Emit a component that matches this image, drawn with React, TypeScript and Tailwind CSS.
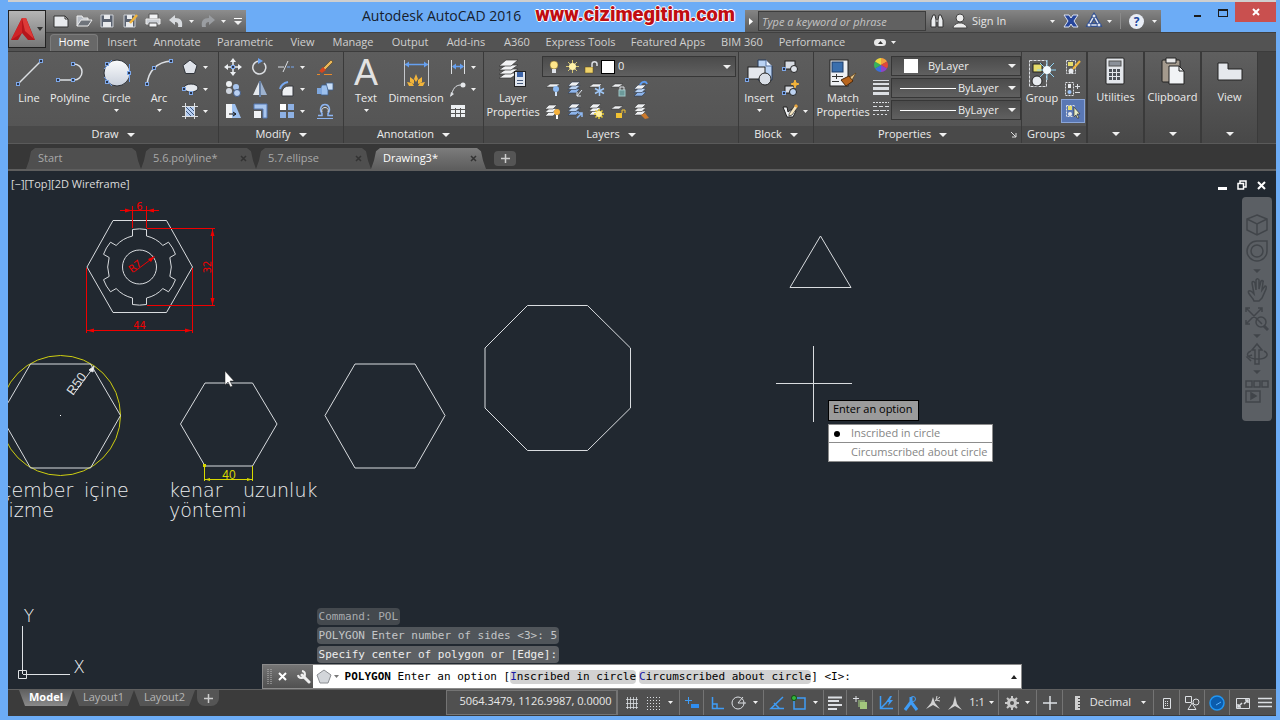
import React, { useState } from 'react';

type IconProps = { size?: number; children: React.ReactNode };

// All icons share the same box; size is also the viewBox
function Icon({ size = 18, children }: IconProps) {
  return (
    <svg className="shrink-0" width={size} height={size} viewBox={`0 0 ${size} ${size}`} fill="none" stroke="#dcdfe3" aria-hidden="true">
      {children}
    </svg>
  );
}

function Caret({ small = false }: { small?: boolean }) {
  return small ? (
    <svg className="shrink-0" width="5" height="3" aria-hidden="true"><path d="M0 0h5L2.500 3z" fill="#f0f0f0" /></svg>
  ) : (
    <svg className="shrink-0" width="8" height="4" aria-hidden="true"><path d="M0 0h8L4 4z" fill="#f0f0f0" /></svg>
  );
}

// Blue grip square used by the drawing icons
function Grip({ x, y }: { x: number; y: number }) {
  return <rect x={x - 1.5} y={y - 1.5} width="3" height="3" fill="#28334a" stroke="#7da7e8" />;
}

const Sheets = ({ x = 0, y = 0 }: { x?: number; y?: number }) => (
  <g transform={`translate(${x} ${y})`} fill="#eef0f2" stroke="#3a3a3a" strokeWidth="0.6">
    <path d="M4 8h8l-4 4H0z" />
    <path d="M4 4.500h8l-4 4H0z" />
    <path d="M4 1h8L8 5H0z" />
  </g>
);

const BlueSheets = ({ x = 0, y = 0 }: { x?: number; y?: number }) => (
  <g transform={`translate(${x} ${y})`} stroke="#2c3a50" strokeWidth="0.6">
    <path d="M4 8h8l-4 4H0z" fill="#8db4ea" />
    <path d="M4 4.500h8l-4 4H0z" fill="#b9d2f3" />
    <path d="M4 1h8L8 5H0z" fill="#eef0f2" />
  </g>
);

const icons = {
  line: (
    <Icon size={28}>
      <path d="M3 25 26 2" strokeWidth="1.500" />
      <Grip x={3} y={25} />
      <Grip x={26} y={2} />
    </Icon>
  ),
  polyline: (
    <Icon size={28}>
      <path d="M2 21h16a8 8 0 0 0 0-16" strokeWidth="1.500" />
      <Grip x={2} y={21} />
      <Grip x={17} y={21} />
      <Grip x={17} y={5} />
    </Icon>
  ),
  circle: (
    <Icon size={28}>
      <defs>
        <linearGradient id="disc" x1="0" y1="0" x2="0" y2="1">
          <stop offset="0" stopColor="#fbfcfd" />
          <stop offset="1" stopColor="#c9d0dc" />
        </linearGradient>
      </defs>
      <circle cx="14" cy="14" r="13" fill="url(#disc)" stroke="#2e3238" />
      <path d="M26.500 5v18M1 10l8-9M1 18l8 9" stroke="#6fa0ec" />
      <Grip x={26} y={14} />
      <Grip x={4} y={5} />
      <Grip x={4} y={23} />
    </Icon>
  ),
  arc: (
    <Icon size={28}>
      <path d="M2 26C3 12 12 3 26 2" strokeWidth="1.500" />
      <Grip x={2} y={25} />
      <Grip x={9} y={9} />
      <Grip x={26} y={2} />
    </Icon>
  ),
  polygon: <Icon><path d="m9 2 7 5.500-2.500 8h-9L2 7.500z" fill="#dfe3ea" stroke="#2f3339" /></Icon>,
  ellipse: (
    <Icon>
      <ellipse cx="10" cy="8" rx="7" ry="4" fill="#e6e9ee" stroke="#2f3339" />
      <Grip x={3} y={9} />
      <Grip x={10} y={13} />
    </Icon>
  ),
  hatch: (
    <Icon>
      <rect x="5" y="5" width="9" height="9" fill="#b7cff2" stroke="none" />
      <path d="m5 9 5 5M5 5l9 9M9 5l5 5" stroke="#40577d" />
      <path d="M4.500 1v16M13.500 1v16M1 4.500h16M1 14.500h16" />
    </Icon>
  ),
  move: (
    <Icon>
      <path d="M9 2v14M2 9h14" strokeWidth="1.500" stroke="#eceff2" />
      <path d="m9 0 3 4H6zM9 18l3-4H6zM0 9l4-3v6zM18 9l-4-3v6z" fill="#eceff2" stroke="none" />
      <Grip x={9} y={9} />
    </Icon>
  ),
  rotate: <Icon><path d="M8 3a6.500 6.500 0 1 0 5 2" strokeWidth="1.500" /><path d="m7 0 5 3-5 3z" fill="#6ea3f0" stroke="none" /></Icon>,
  trim: <Icon><path d="M0 9h6M5 14 10 3" /><path d="M9 9h8" stroke="#79a9f0" strokeDasharray="3 1" /></Icon>,
  erase: (
    <Icon>
      <path d="m6 11 9-9 2 2-9 9z" fill="#e9b75a" stroke="#3a2c14" strokeWidth="0.500" />
      <path d="m3 13 4-4 3 3-4 3z" fill="#d7461d" stroke="none" />
      <path d="M1 16.500h3M8 16.500h8" stroke="#e98a2c" />
    </Icon>
  ),
  copy: (
    <Icon>
      <circle cx="5" cy="4" r="3" fill="#eceff2" stroke="none" />
      <circle cx="5" cy="11" r="3" fill="#cfd5de" stroke="none" />
      <circle cx="12" cy="7" r="3" fill="#a8c5ee" stroke="none" />
      <circle cx="13" cy="13" r="3.500" fill="#b9d0f2" stroke="#405a85" />
    </Icon>
  ),
  mirror: <Icon><path d="M8 2v13H2z" fill="#e4e8ed" stroke="none" /><path d="M10 2v13h6z" fill="#9db2cf" stroke="none" /><path d="M9 1v16" stroke="#79a9f0" /></Icon>,
  fillet: <Icon><path d="M2 9c1-4 3-6 8-7" stroke="#79a9f0" strokeWidth="2" /><path d="M4 16V11c1-3 3-5 7-5h4v10z" fill="#eef0f3" stroke="#34373c" /></Icon>,
  solid: (
    <Icon>
      <path d="M6 5h8l-2 2v8H5V7z" fill="#9cc0ee" stroke="#3f5f8d" strokeWidth="0.800" />
      <path d="M10 3h7v7h-5z" fill="#c9def7" stroke="#3f5f8d" strokeWidth="0.800" />
      <path d="M1 8h5v6H1z" fill="#7ea7de" stroke="none" />
    </Icon>
  ),
  stretch: <Icon><path d="M2 2h6v14H2z" fill="#f2f4f6" stroke="none" /><path d="M8 2h3l6 14H8z" fill="#9dc0ef" stroke="none" /><path d="M5 12h6M9 10l3 2-3 2" stroke="#111" /></Icon>,
  scale: <Icon><path d="M3 2h13v14h-4V7H3z" fill="#a9c6ee" stroke="#5479b3" /><rect x="3" y="9" width="7" height="7" fill="#f0f2f5" stroke="none" /></Icon>,
  array: (
    <Icon>
      <rect x="2" y="2" width="6" height="6" fill="#fff" stroke="none" />
      <rect x="10" y="2" width="6" height="6" fill="#8eb1e4" stroke="none" />
      <rect x="2" y="10" width="6" height="6" fill="#8eb1e4" stroke="none" />
      <rect x="10" y="10" width="6" height="6" fill="#8eb1e4" stroke="none" />
    </Icon>
  ),
  offset: <Icon><path d="M2 13.500h4v-2c-3-4-1-9 3-9s6 5 3 9v2h5" stroke="#8db5f2" strokeWidth="1.500" /><path d="M6 10c-2-6 8-6 6 0" /><path d="M1 16.500h16" stroke="#8db5f2" /></Icon>,
  dimension: (
    <Icon size={28}>
      <path d="M2.500 1v26M26.500 1v26" stroke="#c4c7cb" />
      <path d="M3 5.500h23" stroke="#66a0f0" strokeWidth="1.500" />
      <path d="m3 5.500 4-3v6zM26 5.500l-4-3v6z" fill="#66a0f0" stroke="none" />
      <g fill="#f3b53a" stroke="none">
        <path d="m14 15 2 5-2 3-2-3zM8 18l4 3v4l-4-2zM20 18l-4 3v4l4-2zM5 23l5 1 2 3H7zM23 23l-5 1-2 3h5z" />
      </g>
    </Icon>
  ),
  linear: <Icon><path d="M2.500 2v14M15.500 2v14" /><path d="M4 8.500h10" stroke="#66a0f0" strokeWidth="1.500" /><path d="m3 8.500 4-3v6zM15 8.500l-4-3v6z" fill="#66a0f0" stroke="none" /></Icon>,
  leader: <Icon><path d="M2 16c2-7 4-11 10-11" /><circle cx="14" cy="5" r="2.500" fill="#e6e8eb" stroke="none" /><path d="m1 17 1-5 3 2z" fill="#dcdfe3" stroke="none" /></Icon>,
  table: <Icon><rect x="2" y="3" width="14" height="12" fill="#eceff2" stroke="none" /><path d="M2 7.500h14M2 11.500h14M6.500 6v10M11.500 6v10" stroke="#555" /></Icon>,
  layerProps: (
    <Icon size={28}>
      <g fill="#f2f3f5" stroke="#333" strokeWidth="0.700">
        <path d="M7 14h12l-7 5H0z" /><path d="M7 10h12l-7 5H0z" /><path d="M7 6h12l-7 5H0z" /><path d="M7 1h12l-7 6H0z" />
      </g>
      <rect x="15.500" y="12.500" width="11" height="15" fill="#dfe5ee" stroke="#222" />
      <rect x="18" y="13" width="6" height="5" fill="#3c64a8" stroke="none" />
      <path d="M18 21.500h6M18 24.500h6" stroke="#44587a" />
    </Icon>
  ),
  layerBulb: <Icon><path d="M2 7h10l4-3H6z" fill="#eef0f2" stroke="#333" strokeWidth="0.500" /><circle cx="12" cy="9" r="3" fill="#8cbaf3" stroke="none" /><path d="M12 12v4" stroke="#cfe0f6" strokeWidth="2" /></Icon>,
  layerIso: <Icon><BlueSheets x={2} y={1} /><path d="m16 10-5 6M11 12v4h4" stroke="#dfe6ef" /></Icon>,
  layerFreeze: <Icon><path d="M1 7h10l3-3H5z" fill="#eef0f2" stroke="#333" strokeWidth="0.500" /><path d="M11.500 6v10M7 8.500l9 5M16 8.500l-9 5" stroke="#9fc7f6" strokeWidth="1.500" /></Icon>,
  layerLock: <Icon><path d="M1 7h8l4-3H5z" fill="#eef0f2" stroke="#333" strokeWidth="0.500" /><rect x="9" y="10" width="6" height="6" fill="#6c9a9a" stroke="#9fc6c6" /><path d="M10 10V7h4v3" /></Icon>,
  layerCurrent: <Icon><BlueSheets x={2} y={4} /><path d="M8 5c2-4 6-4 7-1" stroke="#5c9cf2" strokeWidth="2" /></Icon>,
  layerOn: <Icon><Sheets x={1} y={2} /><circle cx="13" cy="10" r="3" fill="#f6b23d" stroke="none" /><path d="M13 13v4" stroke="#fff" strokeWidth="2" /></Icon>,
  layerUniso: <Icon><BlueSheets x={2} y={1} /><path d="m11 16 5-5M12 11h4v4" stroke="#8fb9f3" strokeWidth="1.500" /></Icon>,
  layerThaw: <Icon><Sheets x={1} y={1} /><path d="M11 7v10M6 12h10M7.500 8.500l7 7M14.500 8.500l-7 7" stroke="#e9cb2e" strokeWidth="1.500" /><circle cx="11" cy="12" r="3" fill="#fff0a0" stroke="none" /></Icon>,
  layerUnlock: <Icon><path d="M1 7h8l4-3H5z" fill="#eef0f2" stroke="#333" strokeWidth="0.500" /><rect x="6" y="11" width="6" height="5" fill="#f1c232" stroke="none" /><path d="M12 11V8h3v3" stroke="#f1c232" /></Icon>,
  layerMatch: <Icon><Sheets x={2} y={1} /><path d="m9 13 4-2 4 5-4 1z" fill="#cc7a2c" stroke="none" /></Icon>,
  insert: (
    <Icon size={28}>
      <path d="M13 1h8l6 6v14H13z" fill="#b9d2f3" stroke="#263a5b" />
      <path d="M21 1v6h6" fill="#eaf2fc" stroke="#54719f" />
      <rect x="3" y="8" width="17" height="12" fill="#e4e7ec" stroke="#222" />
      <circle cx="20" cy="20" r="6" fill="#d9dee6" stroke="#222" />
      <Grip x={2} y={21} />
    </Icon>
  ),
  editBlock: <Icon><rect x="4" y="3" width="10" height="8" fill="#d7dbe2" stroke="#222" /><circle cx="13" cy="11" r="3.500" fill="#dfe3ea" stroke="#222" /><Grip x={3} y={11} /></Icon>,
  createBlock: <Icon><rect x="4" y="6" width="9" height="7" fill="#d7dbe2" stroke="#222" /><circle cx="12" cy="12" r="3.500" fill="#bcd2f1" stroke="#222" /><path d="m14 0 1 3 3 1-3 1-1 3-1-3-3-1 3-1z" fill="#f5b53a" stroke="#f5b53a" /><Grip x={3} y={13} /></Icon>,
  attribute: <Icon><path d="m2 5 4 10h6l3-6-4-2-4 3-1-5z" fill="#eef0f2" stroke="#222" /><path d="m8 12 6-9 3 2-6 8-3 1z" fill="#f3e4c0" stroke="#222" strokeWidth="0.700" /><path d="m13 4 2-2 2 2-1 2z" fill="#e7a43d" stroke="none" /></Icon>,
  match: (
    <Icon size={28}>
      <rect x="1" y="1" width="18" height="26" fill="#eef0f3" stroke="#222" />
      <rect x="3" y="3" width="11" height="10" fill="#3a6fae" stroke="#1d3d69" />
      <path d="M3 17.500h11M3 22.500h7M7.500 15v5" stroke="#333" />
      <path d="m12 21 8-4 4 5-7 5z" fill="#b8651d" stroke="#4c2808" />
      <path d="m21 18 6-4-4 7z" fill="#e8c78c" stroke="#5b3c14" strokeWidth="0.700" />
    </Icon>
  ),
  colorWheel: (
    <Icon>
      <g stroke="none">
        <path d="M9 9V2a7 7 0 0 1 6 3.500z" fill="#f2a03d" />
        <path d="m9 9 6-3.500a7 7 0 0 1 0 7z" fill="#e2483a" />
        <path d="m9 9 6 3.500A7 7 0 0 1 9 16z" fill="#8e44c9" />
        <path d="M9 9v7a7 7 0 0 1-6-3.500z" fill="#3a70de" />
        <path d="m9 9-6 3.500a7 7 0 0 1 0-7z" fill="#37b35c" />
        <path d="M9 9 3 5.500A7 7 0 0 1 9 2z" fill="#e8da3f" />
      </g>
    </Icon>
  ),
  lineweight: <Icon><path d="M1 2.500h16" /><path d="M1 6h16" strokeWidth="2" /><path d="M1 10.500h16" strokeWidth="3" /><path d="M1 15.500h16" strokeWidth="3" /></Icon>,
  linetype: <Icon><path d="M1 2.500h16" strokeDasharray="2 1" /><path d="M1 6.500h16" strokeDasharray="4 2" /><path d="M1 10.500h16" strokeDasharray="6 1" /><path d="M1 14.500h16" strokeDasharray="2 2" /></Icon>,
  group: (
    <Icon size={28}>
      <rect x="1.500" y="1.500" width="17" height="26" strokeDasharray="3 1" />
      <rect x="5" y="5" width="9" height="8" fill="#e6dd6d" stroke="#222" />
      <circle cx="9" cy="22" r="5" fill="#e8ebef" stroke="#222" />
      <path d="M19 1v20M9 11h19M12 4l14 14M26 4 12 18" stroke="#8fd4f6" />
      <circle cx="19" cy="11" r="4" fill="#f2fbff" stroke="none" />
    </Icon>
  ),
  groupEdit: <Icon><rect x="2.500" y="2.500" width="9" height="13" strokeDasharray="2 1" /><rect x="4" y="4" width="5" height="4" fill="#e6dd6d" stroke="none" /><circle cx="7" cy="13" r="2.500" fill="#e8ebef" stroke="none" /><path d="m9 11 7-8" stroke="#f0b83f" strokeWidth="2" /></Icon>,
  groupAdd: <Icon><rect x="1.500" y="2.500" width="8" height="13" strokeDasharray="2 1" /><rect x="4" y="4" width="3" height="4" fill="#e8ebef" stroke="none" /><circle cx="5.500" cy="12" r="2" fill="#9dc3f5" stroke="none" /><path d="M11 6.500h5M13.500 4v5M11 12.500h5" /></Icon>,
  groupSelect: <Icon><rect x="2.500" y="3.500" width="8" height="11" strokeDasharray="2 1" /><rect x="4" y="4" width="4" height="4" fill="#e6dd6d" stroke="none" /><circle cx="6" cy="12" r="2" fill="#e8ebef" stroke="none" /><path d="m10 5 6 7h-3l2 4h-2l-1-3-2 2z" fill="#e6ecc5" stroke="#333" strokeWidth="0.700" /></Icon>,
  utilities: (
    <Icon size={28}>
      <rect x="5" y="1" width="18" height="26" rx="1" fill="#e3e6eb" stroke="#222" />
      <rect x="8" y="4" width="12" height="5" fill="#8a9099" stroke="#555" />
      <path d="M8 13.500h12M8 17.500h12M8 21.500h12" stroke="#4c5158" strokeWidth="3" strokeDasharray="3 1" />
    </Icon>
  ),
  clipboard: (
    <Icon size={28}>
      <rect x="3" y="3" width="18" height="22" rx="1" fill="#a49a8d" stroke="#222" />
      <path d="M7 1h10v5H7z" fill="#e8e8e8" stroke="#222" />
      <path d="M10 9h10l5 5v13H10z" fill="#f1f3f5" stroke="#222" />
      <path d="M20 9v5h5" stroke="#222" />
    </Icon>
  ),
  view: <Icon size={28}><path d="M2 6h10v6h14v11H2z" fill="#e5e8ec" stroke="#222" /></Icon>,
};

const quickAccess = [
  { label: 'New', icon: <Icon><path d="M2 4h11l3 3v8H2z" fill="#e8eaed" stroke="#333" /><path d="M13 4v3h3" stroke="#333" /></Icon> },
  { label: 'Open', icon: <Icon><path d="M2 14V4h5l1 2h5v2" fill="#b9bec6" stroke="#eee" /><path d="m2 14 4-6h11l-4 6z" fill="#6f747b" stroke="#eee" /></Icon> },
  { label: 'Save', icon: <Icon><path d="M3 3h12v12H3z" fill="#5a6270" stroke="#ccd0d6" /><path d="M6 3h6v4H6zM5 10h8v5H5z" fill="#e8eaed" stroke="none" /></Icon> },
  { label: 'Save As', icon: <Icon><path d="M3 3h11v12H3z" fill="#5a6270" stroke="#ccd0d6" /><path d="M5 10h7v5H5zM6 3h5v4H6z" fill="#e8eaed" stroke="none" /><path d="m9 11 7-8" stroke="#f0b43c" strokeWidth="2.500" /></Icon> },
  { label: 'Plot', icon: <Icon><path d="M5 2h9v5H5z" fill="#f2f3f5" stroke="#555" /><path d="M2 7h14v5H2z" fill="#ccd0d6" stroke="#eee" /><path d="M5 11h8v4H5z" fill="#f2f3f5" stroke="#555" /></Icon> },
  { label: 'Undo', caret: true, icon: <Icon><path d="m2 8 6-5v3c6 0 8 3 7 9h-4c1-4-1-5-3-5v3z" fill="#d7dade" stroke="none" /></Icon> },
  { label: 'Redo', caret: true, icon: <Icon><path d="m16 8-6-5v3c-6 0-8 3-7 9h4c-1-4 1-5 3-5v3z" fill="#9a9da1" stroke="none" /></Icon> },
];

const ribbonTabs = [
  { label: 'Home', width: 'w-[48px]' },
  { label: 'Insert', width: 'w-[48px]' },
  { label: 'Annotate', width: 'w-[62px]' },
  { label: 'Parametric', width: 'w-[74px]' },
  { label: 'View', width: 'w-[41px]' },
  { label: 'Manage', width: 'w-[60px]' },
  { label: 'Output', width: 'w-[54px]' },
  { label: 'Add-ins', width: 'w-[58px]' },
  { label: 'A360', width: 'w-[44px]' },
  { label: 'Express Tools', width: 'w-[83px]' },
  { label: 'Featured Apps', width: 'w-[92px]' },
  { label: 'BIM 360', width: 'w-[56px]' },
  { label: 'Performance', width: 'w-[84px]' },
];

const fileTabs = [
  { label: 'Start', closable: false },
  { label: '5.6.polyline*', closable: true },
  { label: '5.7.ellipse', closable: true },
  { label: 'Drawing3*', closable: true },
];

type BigButtonProps = { icon: React.ReactNode; label: string; width: string; caret?: boolean };

function BigButton({ icon, label, width, caret }: BigButtonProps) {
  return (
    <button className={`${width} shrink-0 flex flex-col items-center pt-[7px] leading-[14px]`}>
      {icon}
      <span className="mt-1 whitespace-pre-line">{label}</span>
      {caret && <span className="mt-1"><Caret small /></span>}
    </button>
  );
}

function SmallButton({ icon, label, caret, active }: { icon: React.ReactNode; label: string; caret?: boolean; active?: boolean }) {
  return (
    <button aria-label={label} className={`h-[22px] flex items-center gap-1 px-[2px] ${active ? 'bg-[#5977b4] outline outline-[#8aa5d8]' : ''}`}>
      {icon}
      {caret && <Caret small />}
    </button>
  );
}

function Panel({ title, width, launcher, children }: { title: string; width: string; launcher?: boolean; children: React.ReactNode }) {
  return (
    <section className={`${width} shrink-0 flex flex-col border-r border-[#3a3a3a]`}>
      <div className="h-[74px] flex bg-gradient-to-b from-[#5d5d5d] to-[#555555]">{children}</div>
      <div className="flex-1 flex items-center bg-[#494949]">
        <button className="flex-1 flex items-center justify-center gap-2">
          {title}
          <Caret />
        </button>
        {launcher && (
          <button aria-label="Properties settings" className="pr-1">
            <svg width="6" height="6" aria-hidden="true"><path d="m0 0 5 5M5 1v4H1" stroke="#ddd" fill="none" /></svg>
          </button>
        )}
      </div>
    </section>
  );
}

function CollapsedPanel({ icon, label }: { icon: React.ReactNode; label: string }) {
  return (
    <button className="w-[57px] shrink-0 flex flex-col items-center justify-between pt-[5px] pb-[7px] bg-gradient-to-b from-[#5f5f5f] to-[#484848] border-x border-[#3a3a3a]">
      <span className="flex flex-col items-center gap-1">
        {icon}
        {label}
      </span>
      <Caret />
    </button>
  );
}

function PropertySelect({ label, value, swatch }: { label: string; value: string; swatch?: boolean }) {
  return (
    <div className="relative h-[20px] flex items-center bg-gradient-to-b from-[#4b4b4b] to-[#606060] border border-[#363636] pl-2">
      {swatch ? <span className="w-[14px] h-[14px] ml-1 mr-[10px] bg-white" /> : <span className="w-[56px] h-px mr-[2px] bg-white" />}
      <select aria-label={label} className="flex-1 min-w-0 appearance-none outline-none">
        <option>{value}</option>
      </select>
      <span className="absolute right-1 pointer-events-none"><Caret /></span>
    </div>
  );
}

function TitleBar() {
  return (
    <header className="relative h-8 flex items-start border-t-2 border-[#cfcfcf] bg-[#6cacf6]">
      <button aria-label="Application menu" className="absolute left-0 top-2 z-10 w-[38px] h-[38px] flex items-center justify-center gap-[2px] border border-[#222] bg-gradient-to-b from-[#b5b5b5] to-[#777777]">
        <svg width="24" height="26" aria-hidden="true">
          <path d="M11 2 0 24h7l4-7 6 7h7L15 2z" fill="#b5161c" />
          <path d="m11 2 4 0 8 21-9-8z" fill="#dd3a38" />
          <path d="M11 2 0 24l11-7z" fill="#cf2427" />
        </svg>
        <svg width="6" height="4" aria-hidden="true"><path d="M0 0h6L3 4z" fill="#333" /></svg>
      </button>
      <div className="w-[200px] h-[22px] mt-2 ml-[38px] shrink-0 flex items-center bg-gradient-to-b from-[#8d8d8d] to-[#606060] pl-[6px] gap-[5px]">
        {quickAccess.map((item) => (
          <button key={item.label} aria-label={item.label} className="flex items-center gap-1">
            {item.icon}
            {item.caret && <Caret small />}
          </button>
        ))}
        <button aria-label="Customize" className="flex flex-col items-center gap-[2px] ml-[3px]">
          <span className="w-2 h-px bg-white" />
          <Caret />
        </button>
      </div>
      <div className="flex-1 min-w-0 flex items-center whitespace-nowrap">
        <h1 className="ml-[116px] mt-[3px] text-sm text-[#17202c]">Autodesk AutoCAD 2016</h1>
        <a href="#site" className="ml-[14px] font-['Roboto',sans-serif] text-xl leading-[25px] font-black text-[#c00d12] [text-shadow:1px_0_#fff,-1px_0_#fff,0_1px_#fff,0_-1px_#fff]">
          www.cizimegitim.com
        </a>
      </div>
      <div className="w-[416px] h-[22px] mt-2 shrink-0 flex items-center bg-gradient-to-b from-[#858585] to-[#5a5a5a]">
        <button aria-label="Search options" className="w-[13px] shrink-0 flex justify-center">
          <svg width="5" height="7" aria-hidden="true"><path d="M0 0v7l4-3.500z" fill="#fff" /></svg>
        </button>
        <input aria-label="Search" placeholder="Type a keyword or phrase" className="w-[168px] shrink-0 h-5 px-[3px] bg-[#616161] border border-[#3d3d3d] italic placeholder:text-[#c4c4c4]" />
        <button aria-label="Find" className="ml-[2px]">
          <Icon><path d="M3 15V8l2-5h2l1 5v7H3zM10 15V8l1-5h2l2 5v7h-5z" fill="#eceef0" stroke="#333" /><path d="M8 9h2" /></Icon>
        </button>
        <button className="flex items-center gap-1 ml-[6px] whitespace-nowrap">
          <Icon size={16}><circle cx="8" cy="5" r="4" fill="#eee" stroke="#444" /><path d="M1 15c0-3 3-4 5-5h4c2 1 5 2 5 5z" fill="#eee" stroke="#444" /></Icon>
          <span className="text-[#e6e6e6]">Sign In</span>
        </button>
        <span className="ml-auto"><Caret small /></span>
        <button aria-label="Exchange apps" className="ml-[7px]">
          <Icon><path d="M2 3h5l2 3 2-3h5l-4 6 4 6h-5l-2-3-2 3H2l4-6z" fill="#27469b" stroke="#dde3f2" /></Icon>
        </button>
        <button aria-label="Stay connected" className="ml-[5px] flex items-center gap-1">
          <Icon><path d="m9 4 5 9H4z" stroke="#33508f" strokeWidth="4" /><path d="m9 4 5 9H4z" stroke="#dfe4ee" strokeWidth="1.500" /><circle cx="9" cy="4" r="2" fill="#dfe4ee" stroke="#33508f" /><circle cx="4" cy="13" r="2" fill="#dfe4ee" stroke="#33508f" /><circle cx="14" cy="13" r="2" fill="#dfe4ee" stroke="#33508f" /></Icon>
          <Caret small />
        </button>
        <span className="w-px h-4 mx-2 bg-[#8a8a8a]" />
        <button aria-label="Help" className="flex items-center gap-2 mr-1">
          <span className="w-[15px] h-[15px] rounded-full bg-[#e9edf5] text-[#1d479e] text-xs leading-[15px] font-bold">?</span>
          <Caret small />
        </button>
      </div>
      <div className="w-[115px] shrink-0 flex justify-end text-[#1b1b1b]">
        <button aria-label="Minimize" className="w-[25px] h-[21px] flex justify-center items-end pb-[6px]"><span className="w-[7px] h-[2px] bg-[#1b1b1b]" /></button>
        <button aria-label="Maximize" className="w-[25px] h-[21px] flex justify-center items-center"><span className="w-[10px] h-2 border border-t-2 border-[#1b1b1b]" /></button>
        <button aria-label="Close" className="w-[41px] h-[20px] flex justify-center items-center bg-[#c9504f]">
          <svg width="8" height="8" aria-hidden="true"><path d="m1 1 6 6M7 1 1 7" stroke="#fff" strokeWidth="2" /></svg>
        </button>
      </div>
    </header>
  );
}

function Ribbon() {
  const [active, setActive] = useState('Home');

  return (
    <>
      <nav className="h-[19px] flex items-end pl-[42px] bg-[#535353] border-t border-[#404040] text-[#d0d0d0]">
        {ribbonTabs.map((tab) => (
          <button
            key={tab.label}
            onClick={() => setActive(tab.label)}
            className={`${tab.width} shrink-0 h-[17px] pb-[2px] whitespace-nowrap leading-[14px] ${tab.label === active ? 'bg-[#686868] text-white rounded-t-sm border border-b-0 border-[#7c7c7c]' : ''}`}
          >
            {tab.label}
          </button>
        ))}
        <button aria-label="Ribbon display" className="h-[17px] ml-[20px] flex items-center gap-[5px]">
          <span className="w-[12px] h-[7px] rounded-sm bg-[#e8e8e8] flex justify-center items-center">
            <svg width="5" height="3" aria-hidden="true"><path d="M0 3h5L2.500 0z" fill="#333" /></svg>
          </span>
          <Caret small />
        </button>
      </nav>

      <div className="h-[92px] flex border-t border-[#3c3c3c] bg-[#434343] text-[#ececec]">
        <Panel title="Draw" width="w-[211px]">
          <BigButton icon={icons.line} label="Line" width="w-[42px]" />
          <BigButton icon={icons.polyline} label="Polyline" width="w-[40px]" />
          <BigButton icon={icons.circle} label="Circle" width="w-[53px]" caret />
          <BigButton icon={icons.arc} label="Arc" width="w-[32px]" caret />
          <div className="pt-1 pl-1">
            <SmallButton icon={icons.polygon} label="Polygon" caret />
            <SmallButton icon={icons.ellipse} label="Ellipse" caret />
            <SmallButton icon={icons.hatch} label="Hatch" caret />
          </div>
        </Panel>

        <Panel title="Modify" width="w-[125px]">
          <div className="pt-1 pl-[3px] grid grid-cols-[27px_27px_38px_22px] content-start">
            <SmallButton icon={icons.move} label="Move" />
            <SmallButton icon={icons.rotate} label="Rotate" />
            <SmallButton icon={icons.trim} label="Trim" caret />
            <SmallButton icon={icons.erase} label="Erase" />
            <SmallButton icon={icons.copy} label="Copy" />
            <SmallButton icon={icons.mirror} label="Mirror" />
            <SmallButton icon={icons.fillet} label="Fillet" caret />
            <SmallButton icon={icons.solid} label="Explode" />
            <SmallButton icon={icons.stretch} label="Stretch" />
            <SmallButton icon={icons.scale} label="Scale" />
            <SmallButton icon={icons.array} label="Array" caret />
            <SmallButton icon={icons.offset} label="Offset" />
          </div>
        </Panel>

        <Panel title="Annotation" width="w-[140px]">
          <BigButton
            icon={<span className="h-7 text-[36px] leading-[28px] font-['Liberation_Sans',sans-serif] text-[#e2e2e2]">A</span>}
            label="Text"
            width="w-[44px]"
            caret
          />
          <BigButton icon={icons.dimension} label="Dimension" width="w-[56px]" />
          <div className="pt-1 pl-[3px]">
            <SmallButton icon={icons.linear} label="Linear" caret />
            <SmallButton icon={icons.leader} label="Leader" caret />
            <SmallButton icon={icons.table} label="Table" />
          </div>
        </Panel>

        <Panel title="Layers" width="w-[255px]">
          <BigButton icon={icons.layerProps} label={'Layer\nProperties'} width="w-[58px]" />
          <div className="flex-1 pt-1 pr-[2px]">
            <div className="relative h-[21px] flex items-center gap-1 px-1 bg-gradient-to-b from-[#4b4b4b] to-[#606060] border border-[#363636]">
              <Icon size={14}><circle cx="7" cy="5" r="4" fill="#ffe68a" stroke="#7d6420" strokeWidth="0.500" /><path d="M5 9h4v4H5z" fill="#dfe3ea" stroke="none" /></Icon>
              <Icon size={15}><path d="M7.500 1v13M1 7.500h13M3 3l9 9M12 3l-9 9" stroke="#d5c672" /><circle cx="7.500" cy="7.500" r="3.500" fill="#fff2a8" stroke="none" /></Icon>
              <Icon size={14}><rect x="1" y="7" width="8" height="6" fill="#f0d36a" stroke="#5c4a12" strokeWidth="0.500" /><path d="M8 7V4c0-3 5-3 5 0v2" strokeWidth="1.500" /></Icon>
              <span className="w-3 h-3 bg-white outline outline-black" />
              <select aria-label="Layer" className="flex-1 appearance-none outline-none">
                <option>0</option>
              </select>
              <span className="absolute right-1 pointer-events-none"><Caret /></span>
            </div>
            <div className="flex pt-[1px]">
              <SmallButton icon={icons.layerBulb} label="Layer off" />
              <SmallButton icon={icons.layerIso} label="Isolate" />
              <SmallButton icon={icons.layerFreeze} label="Freeze" />
              <SmallButton icon={icons.layerLock} label="Lock" />
              <SmallButton icon={icons.layerCurrent} label="Make current" />
            </div>
            <div className="flex">
              <SmallButton icon={icons.layerOn} label="All layers on" />
              <SmallButton icon={icons.layerUniso} label="Unisolate" />
              <SmallButton icon={icons.layerThaw} label="Thaw all" />
              <SmallButton icon={icons.layerUnlock} label="Unlock" />
              <SmallButton icon={icons.layerMatch} label="Match layer" />
            </div>
          </div>
        </Panel>

        <Panel title="Block" width="w-[75px]">
          <BigButton icon={icons.insert} label="Insert" width="w-[40px]" caret />
          <div className="pt-1">
            <SmallButton icon={icons.editBlock} label="Edit block" />
            <SmallButton icon={icons.createBlock} label="Create block" />
            <SmallButton icon={icons.attribute} label="Attributes" caret />
          </div>
        </Panel>

        <Panel title="Properties" width="w-[208px]" launcher>
          <BigButton icon={icons.match} label={'Match\nProperties'} width="w-[58px]" />
          <div className="pt-1 w-[18px] flex flex-col gap-1">
            {icons.colorWheel}
            {icons.lineweight}
            {icons.linetype}
          </div>
          <div className="flex-1 pt-1 pl-[1px] flex flex-col gap-[2px]">
            <PropertySelect label="Object color" value="ByLayer" swatch />
            <PropertySelect label="Lineweight" value="ByLayer" />
            <PropertySelect label="Linetype" value="ByLayer" />
          </div>
        </Panel>

        <Panel title="Groups" width="w-[65px]">
          <BigButton icon={icons.group} label="Group" width="w-[40px]" />
          <div className="pt-1">
            <SmallButton icon={icons.groupEdit} label="Group edit" />
            <SmallButton icon={icons.groupAdd} label="Add to group" />
            <SmallButton icon={icons.groupSelect} label="Group selection" active />
          </div>
        </Panel>

        <CollapsedPanel icon={icons.utilities} label="Utilities" />
        <CollapsedPanel icon={icons.clipboard} label="Clipboard" />
        <CollapsedPanel icon={icons.view} label="View" />
      </div>
    </>
  );
}

function FileTabs() {
  const [active, setActive] = useState('Drawing3*');

  return (
    <div className="h-7 flex items-end pl-[18px] bg-[#373737] border-t border-[#5a5a5a] border-b-2 border-b-[#5e5e5e]">
      {fileTabs.map((tab) => (
        <div
          key={tab.label}
          className={`w-[115px] h-[21px] shrink-0 flex items-center justify-between pl-3 pr-[9px] [clip-path:polygon(0_100%,3px_60%,5px_15%,9px_0,106px_0,110px_15%,112px_60%,100%_100%)] ${
            tab.label === active ? 'bg-gradient-to-b from-[#7c7c7c] to-[#5e5e5e] text-white' : 'bg-[#4f4f4f] text-[#a9a9a9]'
          }`}
        >
          <button onClick={() => setActive(tab.label)}>{tab.label}</button>
          {tab.closable && (
            <button aria-label={`Close ${tab.label}`}>
              <svg width="7" height="7" aria-hidden="true"><path d="m1 1 5 5M6 1 1 6" stroke="#333" strokeWidth="1.500" /></svg>
            </button>
          )}
        </div>
      ))}
      <button aria-label="New drawing" className="w-[22px] h-[15px] mb-[3px] ml-2 rounded-sm bg-[#555] flex items-center justify-center">
        <svg width="9" height="9" aria-hidden="true"><path d="M4.500 0v9M0 4.500h9" stroke="#ccc" strokeWidth="1.500" /></svg>
      </button>
    </div>
  );
}

// Closed outline of the six-toothed hub, built tooth by tooth around the centre
function gearPath(cx: number, cy: number, body: number, outer: number, half: number) {
  const point = (x: number, y: number, deg: number) => {
    const a = (deg * Math.PI) / 180;
    return `${cx + x * Math.cos(a) - y * Math.sin(a)} ${cy + x * Math.sin(a) + y * Math.cos(a)}`;
  };
  let d = '';
  for (let i = 0; i < 6; i++) {
    const deg = i * 60;
    d += `${i === 0 ? 'M' : `A${body} ${body} 0 0 1 `}${point(-half, -31, deg)}`;
    d += `L${point(-half, -37.5, deg)}A${outer} ${outer} 0 0 1 ${point(half, -37.5, deg)}L${point(half, -31, deg)}`;
  }
  return `${d}A${body} ${body} 0 0 1 ${point(-half, -31, 0)}`;
}

function Drawing() {
  return (
    <svg className="absolute inset-0 w-full h-full" fill="none" stroke="#d9dcdf" role="img" aria-label="Drawing area">
      <g transform="translate(-8 -171)">
        <path d="M87 267l26-46.500h53.500l26 46.500-26 45.500H113z" />
        <path d={gearPath(139.5, 267, 31.8, 38, 7)} />
        <circle cx="139.500" cy="267" r="17" />

        <g stroke="#f00000">
          <path d="M120 210.500h39M132.500 206v22M146.500 206v22M147 228.500h68M147 305.500h68M212.500 229v76M86.500 268v65M192.500 268v65M87 330.500h105M134 272l20-15" />
          <g fill="#f00000" stroke="none">
            <path d="m132 210.500-7-2v4zM147 210.500l7-2v4zM212.500 229l-2 7h4zM212.500 305l-2-7h4zM87 330.500l7-2v4zM192 330.500l-7-2v4zM155 256l-7 3 3 3z" />
          </g>
        </g>
        <g fill="#f00000" stroke="none" fontFamily="DejaVu Sans, sans-serif" fontSize="10" textAnchor="middle">
          <text x="139.500" y="210">6</text>
          <text x="139.500" y="329">44</text>
          <text transform="translate(211 267) rotate(-90)">32</text>
          <text transform="translate(137 269) rotate(-37)">R7</text>
        </g>

        <circle cx="60.500" cy="415.500" r="60" stroke="#cfcf10" />
        <path d="M120.500 415.500l-30 52.500h-60l-30-52.500 30-51.500h60zM93 368 73 395" />
        <path d="M60 415.500h1" stroke="#fff" />
        <path d="m94 366-1 6-4-2z" fill="#eee" />
        <text transform="translate(73 396) rotate(-54)" fill="#d9dcdf" stroke="none" fontFamily="Liberation Sans, sans-serif" fontSize="13">R50</text>

        <path d="M180.500 424 205 383h47.500l24.500 41-24.500 42H205z" />
        <path d="M204.500 466v15M252.500 466v15M205 479.500h47" stroke="#d8d800" />
        <path d="m205 479.500 5-1.500v3zM252 479.500l-5-1.500v3zM203 464h3v3h-3z" fill="#d8d800" stroke="none" />
        <text x="229" y="479" textAnchor="middle" fill="#d8d800" stroke="none" fontFamily="Liberation Sans, sans-serif" fontSize="12">40</text>

        <path d="M325 415.500l30-51.500h60l30 51.500-30 52.500h-60z" />
        <path d="M527.500 305.500h60l43 42.500v60l-43 42.500h-60L485 408v-60z" />
        <path d="M820.500 236 851 287.500h-61z" />
        <path d="M813.500 346v76M776 383.500h76" />

        <g fill="#eef0f2" stroke="none" fontFamily="DejaVu Sans, sans-serif" fontWeight="200" fontSize="19">
          <text x="1" y="497">çember <tspan x="84">içine</tspan></text>
          <text x="-2" y="517">çizme</text>
          <text x="169" y="497">kenar <tspan x="243">uzunluk</tspan></text>
          <text x="169" y="517">yöntemi</text>
        </g>

        <path d="M225 371v14l3-3 2.500 5 2-1-2.500-5h4z" fill="#fff" stroke="#222" strokeWidth="0.500" />
      </g>
    </svg>
  );
}

function NavigationBar() {
  return (
    <div className="absolute right-1 top-[26px] w-[30px] rounded bg-[#5b5f64] pt-4 pb-[17px] flex flex-col items-center">
      <svg width="24" height="191" fill="none" stroke="#41454a" strokeWidth="1.500" aria-hidden="true">
        <path d="m12 2 10 4v11l-10 5-10-5V6zM2 6l10 5 10-5M12 11v11" />
        <path d="M22 28v10a10 10 0 1 1-10-10z" />
        <circle cx="12" cy="38" r="6" />
        <path d="m10 57 2 2 2-2z" fill="#41454a" />
        <path d="M8 86c-3-4-6-7-4-8s4 2 5 3l-2-11c0-2 2-2 3 0l1 7V67c1-2 3-1 3 0v9l2-8c1-1 3 0 2 1l-1 8 3-4c2 0 1 2 1 3l-4 9-3 3h-5z" />
        <path d="m1 95 16 16M17 95 1 111M1 99v-4h4M13 95h4v4M1 107v4h4" />
        <circle cx="16" cy="109" r="5" />
        <path d="m19 113 4 4" strokeWidth="3" />
        <path d="m10 122 2 2 2-2z" fill="#41454a" />
        <path d="M10 151v-14H7l5-6 5 6h-3v14z" />
        <path d="M19 138c6 3 3 8-6 8-10 0-14-5-7-8M6 148l-4-4 5-2" />
        <path d="m10 158 2 2 2-2z" fill="#41454a" />
        <path d="M1 168h6v6H1zM9 168h6v6H9zM17 168h6v6h-6zM1 178h14v11H1z" />
        <path d="m6 180 5 3-5 3z" fill="#41454a" />
      </svg>
    </div>
  );
}

function CommandLine() {
  const history = [
    { text: 'Command: POL', style: 'bg-[#44494e] text-[#a9acaf]' },
    { text: 'POLYGON Enter number of sides <3>: 5', style: 'bg-[#50555a] text-[#c3c5c7]' },
    { text: 'Specify center of polygon or [Edge]:', style: 'bg-[#5d6064] text-[#eeeeee]' },
  ];

  return (
    <div className="absolute bottom-0 inset-x-0 mx-auto w-3/5 font-['DejaVu_Sans_Mono',monospace]">
      <div className="flex flex-col items-start gap-[2px] pl-[55px] pb-px">
        {history.map((line) => (
          <p key={line.text} className={`px-[2px] rounded-sm leading-[17px] ${line.style}`}>{line.text}</p>
        ))}
      </div>
      <div className="h-[25px] flex bg-white border border-[#8b8b8b] text-black whitespace-nowrap">
        <div className="w-[50px] shrink-0 flex items-center gap-[10px] pl-1 bg-gradient-to-b from-[#757575] to-[#505050]">
          <svg width="5" height="16" aria-hidden="true"><path d="M1 0v16M4 0v16" stroke="#bbb" strokeDasharray="1 1" /></svg>
          <button aria-label="Close command line">
            <svg width="9" height="9" className="-ml-1" aria-hidden="true"><path d="m1 1 7 7M8 1 1 8" stroke="#fff" strokeWidth="2" /></svg>
          </button>
          <button aria-label="Customize">
            <svg width="14" height="14" aria-hidden="true"><path d="m5 5 7 7" stroke="#eee" strokeWidth="3" strokeLinecap="round" /><path d="M5 1a3.500 3.500 0 1 1-4 4" stroke="#eee" strokeWidth="2" fill="none" /></svg>
          </button>
        </div>
        <div className="flex-1 flex items-center pl-[3px] leading-[14px]">
          <button aria-label="Recent commands" className="flex items-center gap-[2px]">
            <svg width="16" height="16" aria-hidden="true"><path d="m8 1 7 5-3 8H4L1 6z" fill="#d3d6da" stroke="#8b8e92" /></svg>
            <svg width="5" height="3" aria-hidden="true"><path d="M0 0h5L2.500 3z" fill="#777" /></svg>
          </button>
          <label htmlFor="command" className="ml-[6px] whitespace-pre"><b>POLYGON</b> Enter an option [</label>
          <button className="bg-[#d2d2d2] rounded-sm"><span className="text-[#1a1aa6]">I</span>nscribed in circle</button>
          <button className="ml-[3px] bg-[#d2d2d2] rounded-sm"><span className="text-[#1a1aa6]">C</span>ircumscribed about circle</button>
          <span className="whitespace-pre">] &lt;I&gt;:</span>
          <input id="command" className="flex-1 min-w-0 outline-none" />
          <button aria-label="Command history" className="px-1">
            <svg width="6" height="4" aria-hidden="true"><path d="M0 4h6L3 0z" fill="#222" /></svg>
          </button>
        </div>
      </div>
    </div>
  );
}

function Canvas() {
  return (
    <main className="relative flex-1 min-h-0 overflow-hidden bg-[#212830]">
      <Drawing />
      <p className="absolute left-[3px] top-[5px] text-[#dcdcdc]">[−][Top][2D Wireframe]</p>

      <div className="absolute right-[10px] top-[9px] flex items-center gap-[10px]">
        <button aria-label="Minimize drawing" className="w-[9px] h-[9px] flex items-end"><span className="w-full h-[3px] bg-white" /></button>
        <button aria-label="Restore drawing">
          <svg width="10" height="10" aria-hidden="true"><path d="M3 3V1h6v6H7M1 3.500h5.500V9H1z" stroke="#fff" strokeWidth="1.500" fill="none" /></svg>
        </button>
        <button aria-label="Close drawing">
          <svg width="9" height="9" aria-hidden="true"><path d="m1 1 7 7M8 1 1 8" stroke="#fff" strokeWidth="2" /></svg>
        </button>
      </div>

      <NavigationBar />

      {/* Dynamic input prompt next to the crosshair */}
      <div className="absolute left-[820px] top-[229px] w-[165px]">
        <p className="w-[91px] h-[21px] pl-1 border border-black bg-[#9b9b9b] text-black leading-4 whitespace-nowrap">Enter an option</p>
        <div className="mt-[3px] bg-white border border-[#8c8c8c] text-[#858585]">
          <button className="w-full h-[18px] flex items-center border-b border-[#8c8c8c]">
            <span className="w-[6px] h-[6px] ml-[5px] mr-[11px] rounded-full bg-black" />
            Inscribed in circle
          </button>
          <button className="w-full h-[18px] pl-[22px] text-left whitespace-nowrap">Circumscribed about circle</button>
        </div>
      </div>

      <svg className="absolute bottom-0 left-0" width="90" height="90" fill="none" stroke="#dfe2e5" aria-hidden="true">
        <path d="M14.500 27v48M15 75.500h47M10.500 71.500h8v8h-8z" />
        <g fill="#f2f4f6" stroke="none" fontFamily="DejaVu Sans, sans-serif" fontWeight="200" fontSize="17" textAnchor="middle">
          <text x="21" y="23">Y</text>
          <text x="71" y="74">X</text>
        </g>
      </svg>

      <CommandLine />
    </main>
  );
}

function StatusCell({ width, label, children }: { width: string; label: string; children: React.ReactNode }) {
  return (
    <button aria-label={label} className={`${width} h-[25px] shrink-0 flex items-center justify-center gap-[6px] bg-[#505050] border-l border-[#747474]`}>
      {children}
    </button>
  );
}

function StatusBar() {
  return (
    <footer className="h-[27px] flex items-start bg-[#3b3b3b] border-t border-[#606060] text-[#e8e8e8]">
      <div className="flex pl-[11px] text-[#b5b5b5]">
        {['Model', 'Layout1', 'Layout2'].map((tab) => (
          <button
            key={tab}
            className={`h-4 pb-[2px] leading-[14px] [clip-path:polygon(0_0,100%_0,calc(100%-6px)_100%,6px_100%)] ${
              tab === 'Model' ? 'w-[54px] bg-gradient-to-b from-[#606060] to-[#8a8a8a] text-white font-bold' : 'w-[61px] bg-[#555]'
            }`}
          >
            {tab}
          </button>
        ))}
        <button aria-label="New layout" className="w-[22px] h-4 ml-[2px] bg-[#555] rounded-b-lg flex justify-center items-center">
          <svg width="9" height="9" aria-hidden="true"><path d="M4.500 0v9M0 4.500h9" stroke="#ccc" strokeWidth="1.500" /></svg>
        </button>
      </div>

      <div className="flex ml-auto">
        <button className="w-[171px] h-[25px] pl-2 pb-[2px] shrink-0 bg-[#505050] border border-[#747474] text-[11px] whitespace-nowrap">5064.3479, 1126.9987, 0.0000</button>
        <StatusCell width="w-[62px]" label="Grid">
          <Icon size={16}><path d="M3.500 2v12M6.500 2v12M9.500 2v12M12.500 2v12M2 4.500h12M2 8.500h12M2 12.500h12" strokeWidth="0.800" /></Icon>
          <Icon size={16}><path d="M1 2.500h14M1 5.500h14M1 8.500h14M1 11.500h14M1 14.500h14" strokeDasharray="1 2" /></Icon>
          <Caret small />
        </StatusCell>
        <StatusCell width="w-[24px]" label="Dynamic input">
          <Icon size={16}><path d="M1 5.500h7M4.500 2v7" stroke="#3f9cf5" /><rect x="7" y="9" width="8" height="4" fill="#2f8df0" stroke="none" /></Icon>
        </StatusCell>
        <StatusCell width="w-[60px]" label="Ortho and polar">
          <Icon size={16}><path d="M3.500 2v11.500H15M4 9h4v4" stroke="#3f9cf5" strokeWidth="1.500" /></Icon>
          <Icon size={16}><circle cx="7" cy="8" r="6" /><path d="M7 8h8M7 8l5-6" /></Icon>
          <Caret small />
        </StatusCell>
        <StatusCell width="w-[60px]" label="Object snap">
          <Icon size={16}><path d="M14 2 2 13.500h13M5 8l5 5" stroke="#3f9cf5" strokeWidth="1.500" /></Icon>
          <Icon size={16}><path d="M3 3h11v11H3z" stroke="#3f9cf5" strokeWidth="1.500" /><circle cx="3" cy="3" r="2.500" fill="#37b53b" stroke="#104d12" /></Icon>
          <Caret small />
        </StatusCell>
        <StatusCell width="w-[23px]" label="Lineweight">
          <Icon size={16}><path d="M1 2.500h14M1 6h11M1 10h14M1 14h9" strokeWidth="2" /></Icon>
        </StatusCell>
        <StatusCell width="w-[26px]" label="Selection cycling">
          <Icon size={16}><path d="M1 3.500h6M4 1v6" /><path d="M6 5h7v7H6z" fill="#7d946a" stroke="none" /><path d="M8 7h7v7H8z" fill="#a3c77d" stroke="none" /></Icon>
        </StatusCell>
        <StatusCell width="w-[26px]" label="Dynamic UCS">
          <Icon size={16}><path d="M2.500 1v12.500H15M3 13l6-6" stroke="#3f9cf5" strokeWidth="1.500" /><path d="m12 1-4 6h3l-1 4 5-6h-3l2-4z" fill="#3f9cf5" stroke="none" /></Icon>
        </StatusCell>
        <StatusCell width="w-[100px]" label="Annotation scale">
          <Icon size={16}><path d="M8 2v6M8 7l-6 8M8 7l6 8" stroke="#3f9cf5" strokeWidth="3" /><circle cx="10" cy="4" r="2.500" stroke="#3f9cf5" /></Icon>
          <Icon size={16}><path d="M8 2 6 8l-5 6 7-4 7 4-5-6z" fill="#d2d2d2" stroke="none" /><path d="m10 6 5-4M12 1l-1 4 4 1" stroke="#d2d2d2" /></Icon>
          <Icon size={16}><path d="M8 1 6 9l-5 6 7-4 7 4-5-6z" fill="#d2d2d2" stroke="none" /></Icon>
          <span className="flex items-center gap-1">1:1 <Caret small /></span>
        </StatusCell>
        <StatusCell width="w-[38px]" label="Workspace">
          <Icon size={14}><circle cx="7" cy="7" r="3.500" strokeWidth="3" stroke="#c8c8c8" /><path d="M7 0v3M7 11v3M0 7h3M11 7h3M2 2l2 2M10 10l2 2M12 2l-2 2M4 10l-2 2" strokeWidth="2" stroke="#c8c8c8" /></Icon>
          <Caret small />
        </StatusCell>
        <StatusCell width="w-[26px]" label="Annotation monitor">
          <Icon size={14}><path d="M7 0v14M0 7h14" strokeWidth="1.500" /></Icon>
        </StatusCell>
        <StatusCell width="w-[91px]" label="Units">
          <Icon size={14}><path d="M5 0h5v14H5z" fill="#cfcfcf" stroke="none" /><path d="M8 2.500h2M8 5.500h2M8 8.500h2M8 11.500h2" stroke="#444" /></Icon>
          Decimal
          <span className="ml-1"><Caret small /></span>
        </StatusCell>
        <StatusCell width="w-[26px]" label="Quick properties">
          <Icon size={14}><path d="M3.500 2.500h7v10h-7z" /><path d="M5 5.500h4M5 7.500h4M5 9.500h4" strokeDasharray="1 1" /></Icon>
        </StatusCell>
        <StatusCell width="w-[25px]" label="Isolate objects">
          <Icon size={16}><path d="M1.500 1.500h6v6h-6zM8 8l4 6.500H4z" /><circle cx="12" cy="7" r="3" /></Icon>
        </StatusCell>
        <StatusCell width="w-[25px]" label="Hardware acceleration">
          <Icon size={16}><circle cx="8" cy="8" r="7" fill="#0b5cad" stroke="#2196f3" strokeWidth="1.500" /><path d="m7 10 5-3" stroke="#5eb5ff" /></Icon>
        </StatusCell>
        <StatusCell width="w-[47px]" label="Clean screen">
          <Icon size={16}><path d="M1.500 3.500h13v10h-13z" /><path d="m3 12 4-4M3 9v3h3M13 5 9 9M10 5h3v3" strokeWidth="1.500" /></Icon>
          <Icon size={15}><path d="M1 3.500h14M1 7.500h14M1 11.500h14" strokeWidth="1.500" /></Icon>
        </StatusCell>
      </div>
    </footer>
  );
}

export default function App() {
  return (
    <div className="h-screen min-w-[1280px] flex flex-col pl-2 pr-1 pb-1 overflow-hidden bg-[#6cacf6] font-['Open_Sans','Noto_Sans',sans-serif] text-[11px]">
      <TitleBar />
      <Ribbon />
      <FileTabs />
      <Canvas />
      <StatusBar />
    </div>
  );
}
